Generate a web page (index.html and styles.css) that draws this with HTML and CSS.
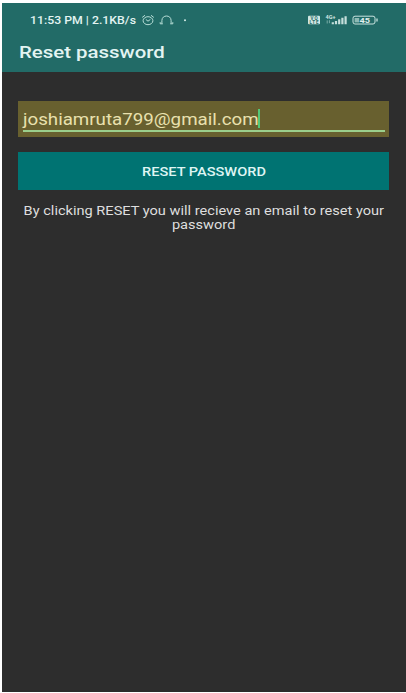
FILE: index.html
```html
<!DOCTYPE html>
<html lang="en">
<head>
<meta charset="utf-8">
<title>Reset password</title>
<link rel="stylesheet" href="styles.css">
</head>
<body>
<div class="screen">
  <header class="top">
    <div class="status">
      <span class="wide clock">11:53 PM | 2.1KB/s</span>
      <svg class="notice" width="50" height="14" viewBox="0 0 50 14" fill="none" stroke="#b9dfd8" stroke-width="1">
        <ellipse cx="7" cy="7.7" rx="4.9" ry="4"/>
        <path d="M1.2 4.4 4 2.3M10 2.3l2.8 2.1M4.8 6.4 7 8.2l2.4-1.8"/>
        <path d="M20.9 10.5V7.5c0-6 9.2-6 9.2 0v3M19.2 9.2v1.6h2.6M29.2 10.8h2.6V9.2"/>
        <circle cx="44" cy="7.2" r="1" fill="#d5ece7" stroke="none"/>
      </svg>
      <svg class="signals" width="74" height="14" viewBox="0 0 74 14">
        <rect x="1" y="2.8" width="12" height="8.5" rx="1" fill="#d0e6e2"/>
        <g class="tiny" fill="#246b67"><text x="3.5" y="6.9" textLength="7">VO</text><text x="2.5" y="10.8" textLength="9">LTE</text></g>
        <text class="tiny" x="18.5" y="5.7" fill="#d0e6e2" textLength="10" lengthAdjust="spacingAndGlyphs">4G+</text>
        <path d="M20.2 10.5V7.4M22.4 7.2v3" stroke="#8ebdb7" stroke-width=".8"/>
        <path d="M25.8 11.2V9.3M29 11.2V8M32.2 11.2V6.2M35.4 11.2V4.8M38.6 11.2V3.3" stroke="#c6dfdc" stroke-width="2.2"/>
        <rect x="46" y="3.2" width="22" height="7.8" rx="2" fill="none" stroke="#c9e3df"/>
        <rect x="47.6" y="5" width="4.6" height="4.4" fill="#8dbab4"/>
        <path d="M70 5.5v3" stroke="#c9e3df" stroke-width="1.3"/>
        <text class="level" x="52.5" y="9.8" fill="#e1efed" textLength="10.5" lengthAdjust="spacingAndGlyphs">45</text>
      </svg>
    </div>
    <h1 class="title"><span class="wide heading">Reset password</span></h1>
  </header>
  <main class="content">
    <div class="field">
      <div class="value"><span class="wide email">joshiamruta799@gmail.com</span><i class="caret"></i></div>
    </div>
    <button class="button"><span class="wide label">RESET PASSWORD</span></button>
    <p class="hint"><span class="wide line">By clicking RESET you will recieve an email to reset your</span><span class="wide line">password</span></p>
  </main>
</div>
</body>
</html>
```
FILE: styles.css
```css
* { box-sizing: border-box; }
body {
  margin: 0;
  padding: 3px 0 1px 2px;
  height: 693px;
  background: #fff;
  font-family: Roboto, sans-serif;
  overflow: hidden;
}
.screen { height: 689px; background: #2d2d2d; }
.wide { display: inline-block; white-space: nowrap; transform-origin: 0 50%; }
.top { height: 69px; background: #226b67; color: #e3f4f2; }
.status { display: flex; align-items: center; height: 34px; padding-left: 28px; }
.clock { width: 107px; font-size: 10.5px; font-weight: 500; transform: scaleX(1.17); }
.notice { margin-left: 4px; }
.signals { margin-left: 116px; }
.tiny { font: 700 4.5px Roboto, sans-serif; }
.level { font: 700 7.8px Roboto, sans-serif; }
.title { margin: 0; padding-left: 16.5px; line-height: 30px; font-weight: 500; font-size: 17px; }
.title .heading { transform: scaleX(1.2); }
.content { padding: 29px 17px 0 16px; }
.field { height: 36px; padding: 8px 4px 0 5px; background: #68602f; }
.value {
  display: flex;
  position: relative;
  height: 23px;
  border-bottom: 2px solid #9bcf8c;
  color: #e9e0ae;
  font-size: 16px;
  line-height: 21px;
}
.email { transform: scaleX(1.17); }
.caret { position: absolute; left: 235px; top: 0; width: 2px; height: 19px; background: #54c878; }
.button {
  display: block;
  width: 100%;
  height: 38px;
  margin-top: 15px;
  padding: 2px 0 0;
  border: 0;
  background: #007372;
  color: #dff5f3;
  font: 500 12px/36px Roboto, sans-serif;
}
.label, .line { transform-origin: 50% 50%; }
.label { transform: scaleX(1.215); }
.hint {
  display: flex;
  flex-direction: column;
  align-items: center;
  margin: 15px 0 0;
  color: #dedede;
  font-size: 12px;
  line-height: 13.5px;
}
.line { transform: translateX(.5px) scaleX(1.215); }
```
